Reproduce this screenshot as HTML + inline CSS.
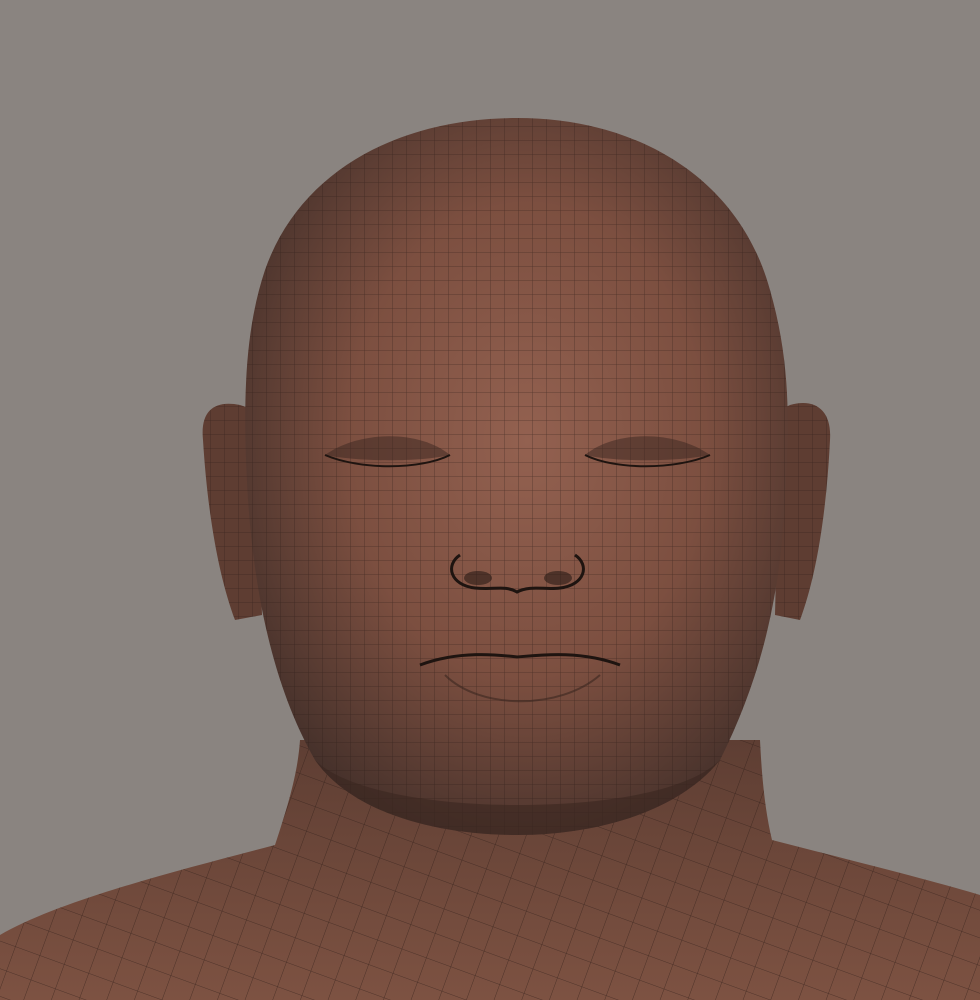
<!DOCTYPE html>
<html><head><meta charset="utf-8"><style>
html,body{margin:0;padding:0;background:#8a8480;}
svg{display:block}
</style></head><body>
<svg width="980" height="1000" viewBox="0 0 980 1000" xmlns="http://www.w3.org/2000/svg">
<defs>
<radialGradient id="skin" cx="0.52" cy="0.45" r="0.6">
<stop offset="0" stop-color="#936150"/>
<stop offset="0.55" stop-color="#7c4f40"/>
<stop offset="1" stop-color="#44302a"/>
</radialGradient>
<linearGradient id="body" x1="0" y1="0" x2="0" y2="1">
<stop offset="0" stop-color="#5e3e33"/>
<stop offset="1" stop-color="#7d5242"/>
</linearGradient>
<pattern id="grid" width="14" height="14" patternUnits="userSpaceOnUse">
<path d="M14 0H0V14" fill="none" stroke="#2a1a15" stroke-width="0.8" opacity="0.6"/>
</pattern>
<pattern id="gridB" width="26" height="26" patternUnits="userSpaceOnUse" patternTransform="rotate(20)">
<path d="M26 0H0V26" fill="none" stroke="#2a1a15" stroke-width="0.8" opacity="0.7"/>
</pattern>
</defs>
<rect width="980" height="1000" fill="#8a8480"/>
<path d="M0 935 C60 900 180 870 275 845 C290 800 298 770 300 740 L760 740 C762 780 765 810 772 840 C850 860 930 880 980 895 L980 1000 L0 1000Z" fill="url(#body)"/>
<path d="M0 935 C60 900 180 870 275 845 C290 800 298 770 300 740 L760 740 C762 780 765 810 772 840 C850 860 930 880 980 895 L980 1000 L0 1000Z" fill="url(#gridB)"/>
<path d="M240 405 C215 400 200 410 203 440 C208 520 220 580 235 620 L262 615 L255 410Z" fill="#5e3d32"/>
<path d="M790 405 C815 398 832 410 830 440 C826 520 815 580 800 620 L775 615 L780 410Z" fill="#5e3d32"/>
<path d="M240 405 C215 400 200 410 203 440 C208 520 220 580 235 620 L262 615 L255 410Z" fill="url(#grid)"/>
<path d="M790 405 C815 398 832 410 830 440 C826 520 815 580 800 620 L775 615 L780 410Z" fill="url(#grid)"/>
<path d="M517 118 C640 118 740 180 770 290 C790 360 790 420 785 500 C780 600 760 680 720 760 C680 810 600 835 517 835 C430 835 350 810 315 760 C275 690 255 600 248 500 C242 400 245 330 265 270 C300 170 400 118 517 118Z" fill="url(#skin)"/>
<path d="M517 118 C640 118 740 180 770 290 C790 360 790 420 785 500 C780 600 760 680 720 760 C680 810 600 835 517 835 C430 835 350 810 315 760 C275 690 255 600 248 500 C242 400 245 330 265 270 C300 170 400 118 517 118Z" fill="url(#grid)"/>
<path d="M315 760 C350 810 430 835 517 835 C600 835 680 810 720 760 C690 790 610 805 517 805 C430 805 345 790 315 760Z" fill="#3a2620" opacity="0.6"/>
<path d="M325 455 C360 430 420 430 450 455 C420 462 360 462 325 455Z" fill="#3a2620" opacity="0.5"/>
<path d="M585 455 C615 430 675 430 710 455 C675 462 615 462 585 455Z" fill="#3a2620" opacity="0.5"/>
<path d="M325 455 C360 470 420 470 450 455" stroke="#1e1410" stroke-width="2" fill="none"/>
<path d="M585 455 C615 470 675 470 710 455" stroke="#1e1410" stroke-width="2" fill="none"/>
<path d="M460 555 C445 565 450 585 475 588 C495 590 505 585 517 592 C530 585 545 590 560 588 C585 585 590 565 575 555" stroke="#1e1410" stroke-width="3" fill="none"/>
<ellipse cx="478" cy="578" rx="14" ry="7" fill="#2a1a15" opacity="0.6"/>
<ellipse cx="558" cy="578" rx="14" ry="7" fill="#2a1a15" opacity="0.6"/>
<path d="M420 665 C460 650 500 655 517 657 C540 655 580 650 620 665" stroke="#1e1410" stroke-width="3" fill="none"/>
<path d="M445 675 C480 710 560 710 600 675" stroke="#3a2620" stroke-width="2" fill="none" opacity="0.6"/>
</svg>
</body></html>
